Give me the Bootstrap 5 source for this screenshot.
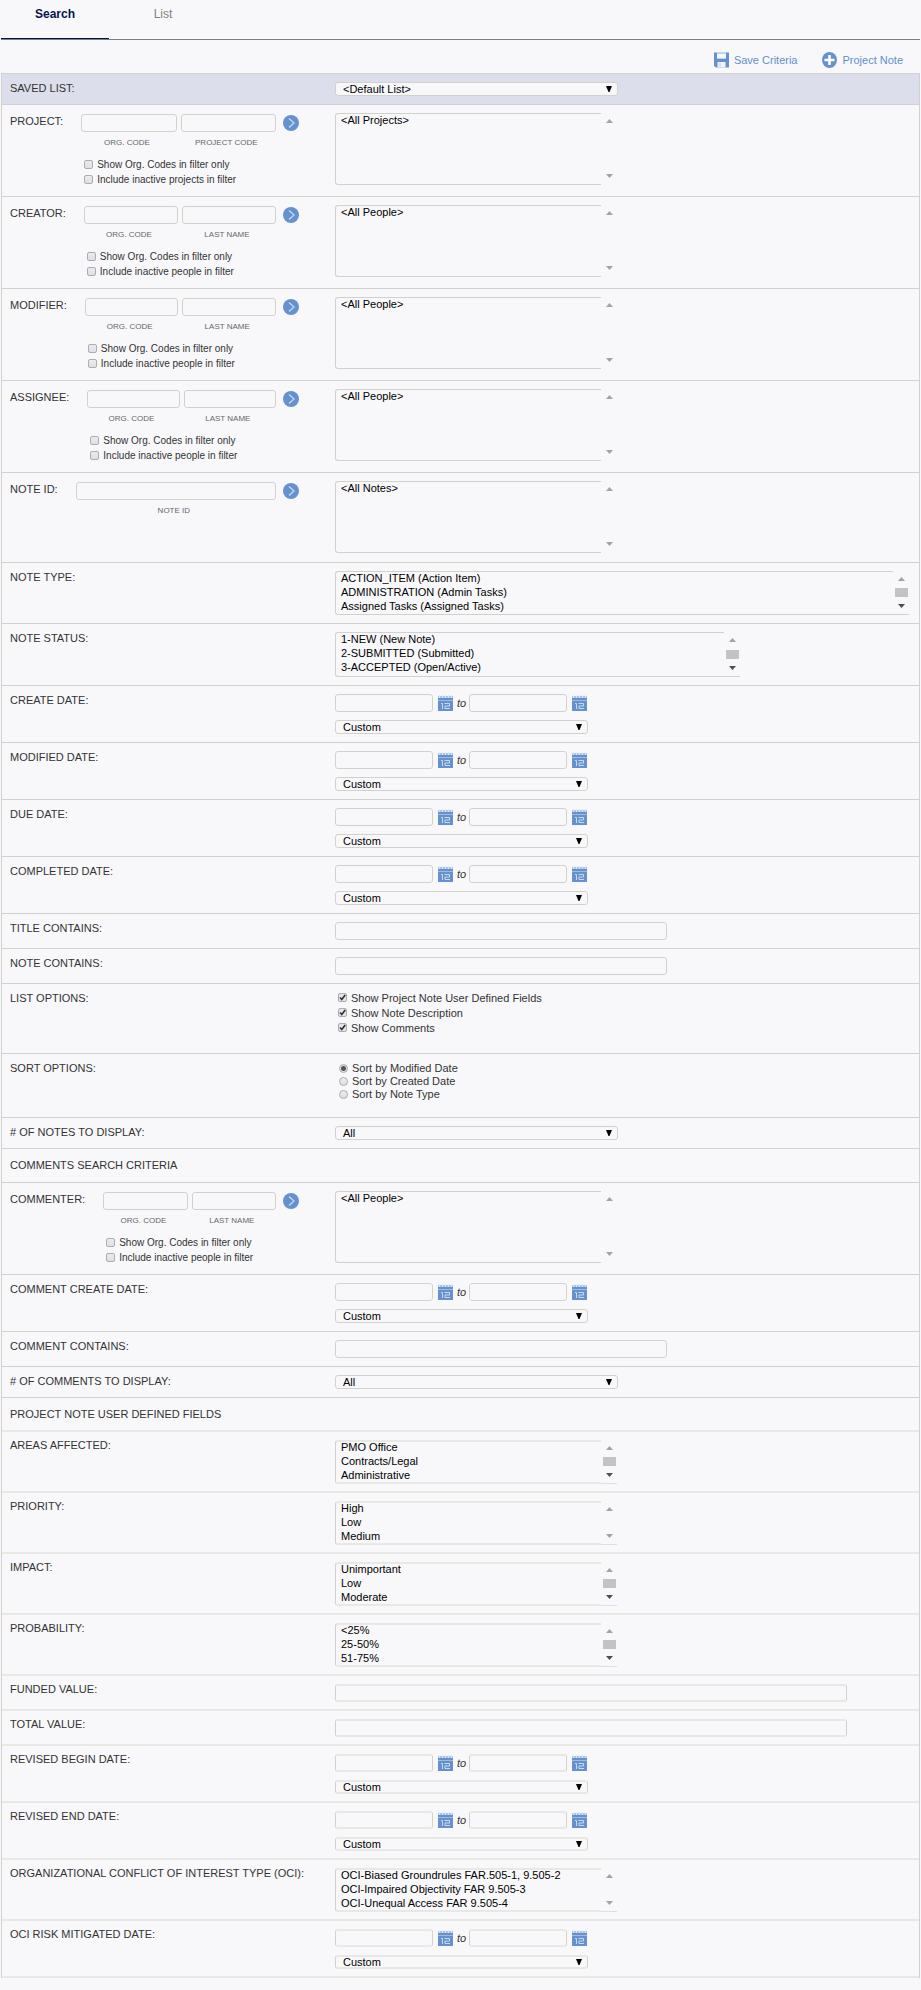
<!DOCTYPE html>
<html lang="en">
<head>
<meta charset="utf-8">
<meta name="viewport" content="width=device-width, initial-scale=1">
<title>Project Notes Search</title>
<link href="https://cdn.jsdelivr.net/npm/bootstrap@5.3.0/dist/css/bootstrap.min.css" rel="stylesheet">
<style>
:root { --line: #d2d2cd; --soft: #e8e8e5; --page: #f8f8fa; --blue: #6592ce; --navy: #06134f; }
body { background: var(--page); color: #333; font-family: "Liberation Sans", Arial, sans-serif; font-size: 11px; line-height: 14px; }
/* tabs */
.note-tabs { border-bottom: 1px solid #7b7f82; margin: 0 1px; font-size: 12px; }
.note-tabs .nav-link { width: 108px; height: 39px; margin: 0; padding: 6px 0 0; border: 0; border-radius: 0; text-align: center; line-height: 16px; color: #808085; background: transparent; }
.note-tabs .nav-link.active { color: var(--navy); font-weight: 700; background: transparent; border-bottom: 1px solid var(--navy); }
.tools { height: 33px; padding: 11px 18px 0 0; gap: 25px; }
.tools a { color: #5f8fcc; gap: 5px; height: 18px; }
/* rows */
.criteria { margin: 0 1px; border: 1px solid var(--line); border-bottom: 0; }
.crit { display: flex; padding: 8px; border-bottom: 1px solid var(--line); }
.crit-head { background: #dcdeeb; }
.crit-deep { padding-bottom: 9px; }
.crit-name { width: 325px; flex: none; padding-right: 36px; line-height: 12px; }
.crit-body { flex: 1 1 0; min-width: 0; }
.crit-sect { padding-top: 9px; padding-bottom: 10px; }
/* controls */
.crit .form-control { height: 18px; min-height: 0; padding: 0 4px; font-size: 11px; line-height: 14px; border: 1px solid var(--line); border-radius: 3px; background: var(--page); }
.crit .form-select { display: block; height: 14px; padding: 0 18px 0 7px; font-size: 11px; line-height: 12px; color: #000; border: 1px solid var(--line); border-radius: 3px;
  background: var(--page) url("data:image/svg+xml,%3Csvg xmlns='http://www.w3.org/2000/svg' width='6' height='6'%3E%3Cpath d='M0 0h6L3.5 6h-1z'/%3E%3C/svg%3E") no-repeat right 5px top 3px / 6px 6px; }
.w-menu { max-width: 283px; }
.w-when { max-width: 253px; }
.w-text { max-width: 332px; }
.w-long { max-width: 512px; }
.listbox { display: flex; width: 100%; max-width: 282px; height: 44px; }
.listbox select { flex: 1 1 0; min-width: 0; padding: 0; color: #000; font-size: 11px; border: 1px solid var(--line); border-right: 0; border-radius: 3px 0 0 3px; background: var(--page); overflow: hidden; scrollbar-width: none; outline: 0; }
.listbox option { min-height: 0; height: 14px; padding: 0 5px 2px; line-height: 12px; }
.listbox-tall { height: 72px; }
.listbox-wide { max-width: 574px; }
.listbox-mid { max-width: 405px; height: 45px; }
.rail { width: 16px; flex: none; display: flex; flex-direction: column; justify-content: space-between; align-items: center; padding: 6px 0 6px 1px; border-bottom: 1px solid var(--line); }
.listbox-tall .rail { border-bottom-color: transparent; }
.rail i { width: 7px; height: 4px; background: #a3a3a3; clip-path: polygon(50% 0, 100% 100%, 0 100%); }
.rail i:last-child { clip-path: polygon(0 0, 100% 0, 50% 100%); }
.rail b { width: 13px; height: 9px; background: #c4c2c7; }
.rail b + i { background: #4a4f55; }
/* lookups */
.lookup { display: flex; padding-top: 1px; }
.lookup > label { margin: 1px 18px 0 0; flex: none; }
.lookup-pair { display: flex; gap: 4px; }
.lookup-pair > div { flex: 1 1 0; min-width: 0; text-align: center; }
.lookup-pair label { display: block; margin-top: 6px; padding-right: 4px; font-size: 8px; line-height: 10px; color: #666; }
.lookup-opts { padding: 9px 0 1px 3px; font-size: 10px; }
.go { flex: none; width: 16px; height: 16px; margin: 1px 0 0 7px; padding: 0; border: 0; background: none; display: block; }
.go svg, .cal svg { display: block; }
.tick { display: flex; align-items: center; height: 15px; gap: 4px; }
.tick input { appearance: none; flex: none; width: 9px; height: 9px; margin: 0; border: 1px solid #adadad; border-radius: 2px; background: linear-gradient(#ececec, #dcdeec); }
.tick input[type=radio] { margin-top: 2px; border-radius: 50%; }
.tick input[type=checkbox]:checked { background: url("data:image/svg+xml,%3Csvg xmlns='http://www.w3.org/2000/svg' viewBox='0 0 7 7'%3E%3Cpath d='M1 3.5l1.8 2L6.2 1' fill='none' stroke='%23333' stroke-width='1.7'/%3E%3C/svg%3E") #e4e4ea; }
.tick input[type=radio]:checked { background: radial-gradient(circle, #555 0 2px, #e2e2e6 3px); }
.picks { margin-top: -2px; padding-left: 3px; height: 55px; }
.sorts { margin-top: -1px; padding-left: 4px; height: 48px; }
.sorts .tick { height: 13px; }
.when { display: flex; align-items: center; margin-bottom: 8px; }
.when .form-control { width: 98px; flex: none; }
.when em { margin: 0 3px 0 4px; line-height: 14px; }
.cal { padding: 0; border: 0; background: none; margin: 0 0 0 5px; }
/* user defined fields */
.udf .crit { border-bottom: 2px solid var(--soft); padding-bottom: 7px; }
.udf .crit-sect { padding-bottom: 9px; }
.udf .form-control, .udf .form-select { border-top: 2px solid var(--soft); border-bottom: 2px solid var(--soft); }
.udf .listbox select { border-top-color: var(--soft); border-bottom: 2px solid var(--soft); box-shadow: inset 0 1px var(--soft); }
.udf .form-select { background-position: right 5px top 2px; line-height: 10px; }
.udf .rail { border-bottom: 1px solid #dcdeeb; }
.udf .crit-name { margin-top: -1px; }
</style>
</head>
<body>
<svg width="0" height="0" class="position-absolute" aria-hidden="true">
  <symbol id="i-go" viewBox="0 0 16 16"><circle cx="8" cy="8" r="8" fill="#6592ce"/><path d="M6 3.5l5 4.5-5 4.5" fill="none" stroke="#c8dcf2" stroke-width="1.2"/></symbol>
  <symbol id="i-cal" viewBox="0 0 15 16"><path d="M0 1h15v15H0z" fill="#6592ce"/><path d="M0 1h15v2H0z" fill="#a9c4e6"/><path d="M1.500 0v3M4.500 0v3M7.500 0v3M10.500 0v3M13.500 0v3" stroke="#dbe7f5" stroke-width="1"/><path d="M0 5.500h15" stroke="#9dbce4"/><path d="M3 8.500h1.500V14M6.500 8.500h5v2.500H7v2.500h5" fill="none" stroke="#c9daf0" stroke-width="1"/></symbol>
</svg>

<nav class="nav nav-tabs note-tabs" aria-label="Views">
  <a class="nav-link active" aria-current="page" href="#search">Search</a>
  <a class="nav-link" href="#list">List</a>
</nav>

<div class="tools d-flex justify-content-end">
  <a href="#save" class="d-flex align-items-center text-decoration-none">
    <svg width="15" height="16" viewBox="0 0 15 16" aria-hidden="true"><path d="M0 .5h15v15H2L0 14z" fill="#6592ce"/><path d="M3 .5h9v6.500H3z" fill="#f8f8fa"/><path d="M3 .5h9v1.500H3zM3 6h9v1H3z" fill="#b9d2ee"/><path d="M3.500 10h8v5.500h-8z" fill="#f1f4fa"/><path d="M4.500 11h2.500v3.500H4.500z" fill="#d5dff0"/></svg>Save Criteria</a>
  <a href="#note" class="d-flex align-items-center text-decoration-none">
    <svg width="15" height="16" viewBox="0 0 15 16" aria-hidden="true"><ellipse cx="7.500" cy="8" rx="7.500" ry="8" fill="#6592ce"/><path d="M7.500 3v10M2.500 8h10" stroke="#fff" stroke-width="2.600"/></svg>Project Note</a>
</div>

<form class="criteria" id="search">
  <div class="crit crit-head">
    <div class="crit-name"><label for="saved">SAVED LIST:</label></div>
    <div class="crit-body"><select id="saved" class="form-select w-menu"><option>&lt;Default List&gt;</option></select></div>
  </div>

  <div class="crit">
    <div class="crit-name lookup">
      <label for="proj-list">PROJECT:</label>
      <div class="flex-fill">
        <div class="lookup-pair">
          <div><input id="p-org" class="form-control"><label for="p-org">ORG. CODE</label></div>
          <div><input id="p-code" class="form-control"><label for="p-code">PROJECT CODE</label></div>
        </div>
        <div class="lookup-opts">
          <label class="tick"><input type="checkbox">Show Org. Codes in filter only</label>
          <label class="tick"><input type="checkbox">Include inactive projects in filter</label>
        </div>
      </div>
      <button type="button" class="go" aria-label="Find project"><svg width="16" height="16"><use href="#i-go"/></svg></button>
    </div>
    <div class="crit-body"><div class="listbox listbox-tall"><select id="proj-list" multiple size="5"><option>&lt;All Projects&gt;</option></select><span class="rail"><i></i><i></i></span></div></div>
  </div>

  <div class="crit">
    <div class="crit-name lookup">
      <label for="creator-list">CREATOR:</label>
      <div class="flex-fill">
        <div class="lookup-pair">
          <div><input id="c-org" class="form-control"><label for="c-org">ORG. CODE</label></div>
          <div><input id="c-last" class="form-control"><label for="c-last">LAST NAME</label></div>
        </div>
        <div class="lookup-opts">
          <label class="tick"><input type="checkbox">Show Org. Codes in filter only</label>
          <label class="tick"><input type="checkbox">Include inactive people in filter</label>
        </div>
      </div>
      <button type="button" class="go" aria-label="Find creator"><svg width="16" height="16"><use href="#i-go"/></svg></button>
    </div>
    <div class="crit-body"><div class="listbox listbox-tall"><select id="creator-list" multiple size="5"><option>&lt;All People&gt;</option></select><span class="rail"><i></i><i></i></span></div></div>
  </div>

  <div class="crit">
    <div class="crit-name lookup">
      <label for="modifier-list">MODIFIER:</label>
      <div class="flex-fill">
        <div class="lookup-pair">
          <div><input id="m-org" class="form-control"><label for="m-org">ORG. CODE</label></div>
          <div><input id="m-last" class="form-control"><label for="m-last">LAST NAME</label></div>
        </div>
        <div class="lookup-opts">
          <label class="tick"><input type="checkbox">Show Org. Codes in filter only</label>
          <label class="tick"><input type="checkbox">Include inactive people in filter</label>
        </div>
      </div>
      <button type="button" class="go" aria-label="Find modifier"><svg width="16" height="16"><use href="#i-go"/></svg></button>
    </div>
    <div class="crit-body"><div class="listbox listbox-tall"><select id="modifier-list" multiple size="5"><option>&lt;All People&gt;</option></select><span class="rail"><i></i><i></i></span></div></div>
  </div>

  <div class="crit">
    <div class="crit-name lookup">
      <label for="assignee-list">ASSIGNEE:</label>
      <div class="flex-fill">
        <div class="lookup-pair">
          <div><input id="a-org" class="form-control"><label for="a-org">ORG. CODE</label></div>
          <div><input id="a-last" class="form-control"><label for="a-last">LAST NAME</label></div>
        </div>
        <div class="lookup-opts">
          <label class="tick"><input type="checkbox">Show Org. Codes in filter only</label>
          <label class="tick"><input type="checkbox">Include inactive people in filter</label>
        </div>
      </div>
      <button type="button" class="go" aria-label="Find assignee"><svg width="16" height="16"><use href="#i-go"/></svg></button>
    </div>
    <div class="crit-body"><div class="listbox listbox-tall"><select id="assignee-list" multiple size="5"><option>&lt;All People&gt;</option></select><span class="rail"><i></i><i></i></span></div></div>
  </div>

  <div class="crit crit-deep">
    <div class="crit-name lookup">
      <label for="note-list">NOTE ID:</label>
      <div class="flex-fill">
        <div class="lookup-pair">
          <div><input id="n-id" class="form-control"><label for="n-id">NOTE ID</label></div>
        </div>
      </div>
      <button type="button" class="go" aria-label="Find note"><svg width="16" height="16"><use href="#i-go"/></svg></button>
    </div>
    <div class="crit-body"><div class="listbox listbox-tall"><select id="note-list" multiple size="5"><option>&lt;All Notes&gt;</option></select><span class="rail"><i></i><i></i></span></div></div>
  </div>

  <div class="crit">
    <div class="crit-name"><label for="type">NOTE TYPE:</label></div>
    <div class="crit-body"><div class="listbox listbox-wide"><select id="type" multiple size="3"><option>ACTION_ITEM (Action Item)</option><option>ADMINISTRATION (Admin Tasks)</option><option>Assigned Tasks (Assigned Tasks)</option></select><span class="rail"><i></i><b></b><i></i></span></div></div>
  </div>
  <div class="crit">
    <div class="crit-name"><label for="status">NOTE STATUS:</label></div>
    <div class="crit-body"><div class="listbox listbox-mid"><select id="status" multiple size="3"><option>1-NEW (New Note)</option><option>2-SUBMITTED (Submitted)</option><option>3-ACCEPTED (Open/Active)</option></select><span class="rail"><i></i><b></b><i></i></span></div></div>
  </div>

  <div class="crit">
    <div class="crit-name"><label for="create-from">CREATE DATE:</label></div>
    <div class="crit-body">
      <div class="when"><input id="create-from" class="form-control"><button type="button" class="cal" aria-label="Pick start date"><svg width="15" height="16"><use href="#i-cal"/></svg></button><em>to</em><input class="form-control" aria-label="Create date to"><button type="button" class="cal" aria-label="Pick end date"><svg width="15" height="16"><use href="#i-cal"/></svg></button></div>
      <select class="form-select w-when" aria-label="Create date range"><option>Custom</option></select>
    </div>
  </div>
  <div class="crit">
    <div class="crit-name"><label for="mod-from">MODIFIED DATE:</label></div>
    <div class="crit-body">
      <div class="when"><input id="mod-from" class="form-control"><button type="button" class="cal" aria-label="Pick start date"><svg width="15" height="16"><use href="#i-cal"/></svg></button><em>to</em><input class="form-control" aria-label="Modified date to"><button type="button" class="cal" aria-label="Pick end date"><svg width="15" height="16"><use href="#i-cal"/></svg></button></div>
      <select class="form-select w-when" aria-label="Modified date range"><option>Custom</option></select>
    </div>
  </div>
  <div class="crit">
    <div class="crit-name"><label for="due-from">DUE DATE:</label></div>
    <div class="crit-body">
      <div class="when"><input id="due-from" class="form-control"><button type="button" class="cal" aria-label="Pick start date"><svg width="15" height="16"><use href="#i-cal"/></svg></button><em>to</em><input class="form-control" aria-label="Due date to"><button type="button" class="cal" aria-label="Pick end date"><svg width="15" height="16"><use href="#i-cal"/></svg></button></div>
      <select class="form-select w-when" aria-label="Due date range"><option>Custom</option></select>
    </div>
  </div>
  <div class="crit">
    <div class="crit-name"><label for="done-from">COMPLETED DATE:</label></div>
    <div class="crit-body">
      <div class="when"><input id="done-from" class="form-control"><button type="button" class="cal" aria-label="Pick start date"><svg width="15" height="16"><use href="#i-cal"/></svg></button><em>to</em><input class="form-control" aria-label="Completed date to"><button type="button" class="cal" aria-label="Pick end date"><svg width="15" height="16"><use href="#i-cal"/></svg></button></div>
      <select class="form-select w-when" aria-label="Completed date range"><option>Custom</option></select>
    </div>
  </div>

  <div class="crit">
    <div class="crit-name"><label for="title-has">TITLE CONTAINS:</label></div>
    <div class="crit-body"><input id="title-has" class="form-control w-text"></div>
  </div>
  <div class="crit">
    <div class="crit-name"><label for="note-has">NOTE CONTAINS:</label></div>
    <div class="crit-body"><input id="note-has" class="form-control w-text"></div>
  </div>
  <div class="crit">
    <div class="crit-name">LIST OPTIONS:</div>
    <div class="crit-body"><div class="picks">
      <label class="tick"><input type="checkbox" checked>Show Project Note User Defined Fields</label>
      <label class="tick"><input type="checkbox" checked>Show Note Description</label>
      <label class="tick"><input type="checkbox" checked>Show Comments</label>
    </div></div>
  </div>
  <div class="crit">
    <div class="crit-name">SORT OPTIONS:</div>
    <div class="crit-body"><div class="sorts">
      <label class="tick"><input type="radio" name="sort" checked>Sort by Modified Date</label>
      <label class="tick"><input type="radio" name="sort">Sort by Created Date</label>
      <label class="tick"><input type="radio" name="sort">Sort by Note Type</label>
    </div></div>
  </div>
  <div class="crit">
    <div class="crit-name"><label for="note-max"># OF NOTES TO DISPLAY:</label></div>
    <div class="crit-body"><select id="note-max" class="form-select w-menu"><option>All</option></select></div>
  </div>

  <div class="crit crit-sect">COMMENTS SEARCH CRITERIA</div>

  <div class="crit">
    <div class="crit-name lookup">
      <label for="commenter-list">COMMENTER:</label>
      <div class="flex-fill">
        <div class="lookup-pair">
          <div><input id="k-org" class="form-control"><label for="k-org">ORG. CODE</label></div>
          <div><input id="k-last" class="form-control"><label for="k-last">LAST NAME</label></div>
        </div>
        <div class="lookup-opts">
          <label class="tick"><input type="checkbox">Show Org. Codes in filter only</label>
          <label class="tick"><input type="checkbox">Include inactive people in filter</label>
        </div>
      </div>
      <button type="button" class="go" aria-label="Find commenter"><svg width="16" height="16"><use href="#i-go"/></svg></button>
    </div>
    <div class="crit-body"><div class="listbox listbox-tall"><select id="commenter-list" multiple size="5"><option>&lt;All People&gt;</option></select><span class="rail"><i></i><i></i></span></div></div>
  </div>
  <div class="crit">
    <div class="crit-name"><label for="com-from">COMMENT CREATE DATE:</label></div>
    <div class="crit-body">
      <div class="when"><input id="com-from" class="form-control"><button type="button" class="cal" aria-label="Pick start date"><svg width="15" height="16"><use href="#i-cal"/></svg></button><em>to</em><input class="form-control" aria-label="Comment create date to"><button type="button" class="cal" aria-label="Pick end date"><svg width="15" height="16"><use href="#i-cal"/></svg></button></div>
      <select class="form-select w-when" aria-label="Comment create date range"><option>Custom</option></select>
    </div>
  </div>
  <div class="crit">
    <div class="crit-name"><label for="com-has">COMMENT CONTAINS:</label></div>
    <div class="crit-body"><input id="com-has" class="form-control w-text"></div>
  </div>
  <div class="crit">
    <div class="crit-name"><label for="com-max"># OF COMMENTS TO DISPLAY:</label></div>
    <div class="crit-body"><select id="com-max" class="form-select w-menu"><option>All</option></select></div>
  </div>

  <div class="udf">
    <div class="crit crit-sect">PROJECT NOTE USER DEFINED FIELDS</div>
    <div class="crit">
      <div class="crit-name"><label for="areas">AREAS AFFECTED:</label></div>
      <div class="crit-body"><div class="listbox"><select id="areas" multiple size="3"><option>PMO Office</option><option>Contracts/Legal</option><option>Administrative</option></select><span class="rail"><i></i><b></b><i></i></span></div></div>
    </div>
    <div class="crit">
      <div class="crit-name"><label for="priority">PRIORITY:</label></div>
      <div class="crit-body"><div class="listbox"><select id="priority" multiple size="3"><option>High</option><option>Low</option><option>Medium</option></select><span class="rail"><i></i><i></i></span></div></div>
    </div>
    <div class="crit">
      <div class="crit-name"><label for="impact">IMPACT:</label></div>
      <div class="crit-body"><div class="listbox"><select id="impact" multiple size="3"><option>Unimportant</option><option>Low</option><option>Moderate</option></select><span class="rail"><i></i><b></b><i></i></span></div></div>
    </div>
    <div class="crit">
      <div class="crit-name"><label for="prob">PROBABILITY:</label></div>
      <div class="crit-body"><div class="listbox"><select id="prob" multiple size="3"><option>&lt;25%</option><option>25-50%</option><option>51-75%</option></select><span class="rail"><i></i><b></b><i></i></span></div></div>
    </div>
    <div class="crit">
      <div class="crit-name"><label for="funded">FUNDED VALUE:</label></div>
      <div class="crit-body"><input id="funded" class="form-control w-long"></div>
    </div>
    <div class="crit">
      <div class="crit-name"><label for="total">TOTAL VALUE:</label></div>
      <div class="crit-body"><input id="total" class="form-control w-long"></div>
    </div>
    <div class="crit">
      <div class="crit-name"><label for="rb-from">REVISED BEGIN DATE:</label></div>
      <div class="crit-body">
        <div class="when"><input id="rb-from" class="form-control"><button type="button" class="cal" aria-label="Pick start date"><svg width="15" height="16"><use href="#i-cal"/></svg></button><em>to</em><input class="form-control" aria-label="Revised begin date to"><button type="button" class="cal" aria-label="Pick end date"><svg width="15" height="16"><use href="#i-cal"/></svg></button></div>
        <select class="form-select w-when" aria-label="Revised begin date range"><option>Custom</option></select>
      </div>
    </div>
    <div class="crit">
      <div class="crit-name"><label for="re-from">REVISED END DATE:</label></div>
      <div class="crit-body">
        <div class="when"><input id="re-from" class="form-control"><button type="button" class="cal" aria-label="Pick start date"><svg width="15" height="16"><use href="#i-cal"/></svg></button><em>to</em><input class="form-control" aria-label="Revised end date to"><button type="button" class="cal" aria-label="Pick end date"><svg width="15" height="16"><use href="#i-cal"/></svg></button></div>
        <select class="form-select w-when" aria-label="Revised end date range"><option>Custom</option></select>
      </div>
    </div>
    <div class="crit">
      <div class="crit-name pe-0"><label for="oci">ORGANIZATIONAL CONFLICT OF INTEREST TYPE (OCI):</label></div>
      <div class="crit-body"><div class="listbox"><select id="oci" multiple size="3"><option>OCI-Biased Groundrules FAR.505-1, 9.505-2</option><option>OCI-Impaired Objectivity FAR 9.505-3</option><option>OCI-Unequal Access FAR 9.505-4</option></select><span class="rail"><i></i><i></i></span></div></div>
    </div>
    <div class="crit">
      <div class="crit-name"><label for="risk-from">OCI RISK MITIGATED DATE:</label></div>
      <div class="crit-body">
        <div class="when"><input id="risk-from" class="form-control"><button type="button" class="cal" aria-label="Pick start date"><svg width="15" height="16"><use href="#i-cal"/></svg></button><em>to</em><input class="form-control" aria-label="OCI risk mitigated date to"><button type="button" class="cal" aria-label="Pick end date"><svg width="15" height="16"><use href="#i-cal"/></svg></button></div>
        <select class="form-select w-when" aria-label="OCI risk mitigated date range"><option>Custom</option></select>
      </div>
    </div>
  </div>
</form>
<script src="https://cdn.jsdelivr.net/npm/bootstrap@5.3.0/dist/js/bootstrap.bundle.min.js"></script>
</body>
</html>
